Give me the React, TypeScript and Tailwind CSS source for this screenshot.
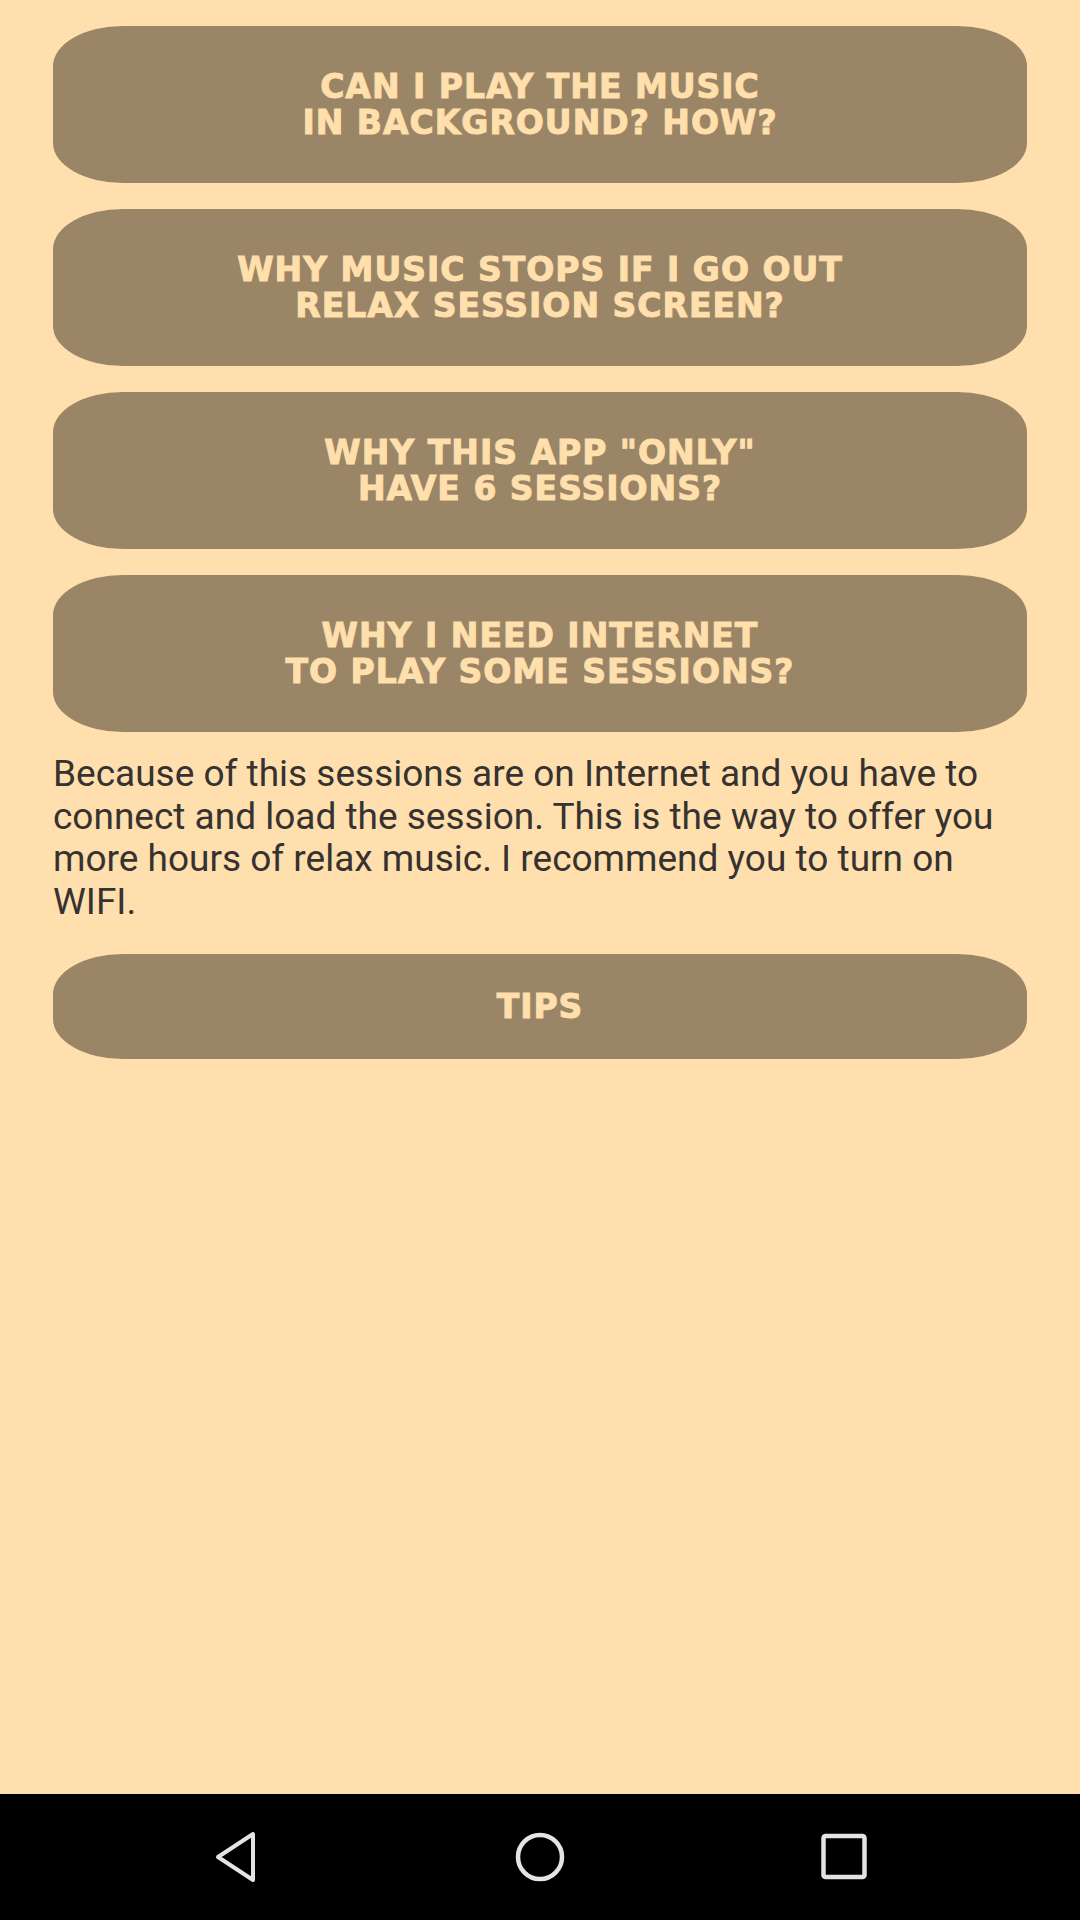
const questions = [
  ['CAN I PLAY THE MUSIC', 'IN BACKGROUND? HOW?'],
  ['WHY MUSIC STOPS IF I GO OUT', 'RELAX SESSION SCREEN?'],
  ['WHY THIS APP "ONLY"', 'HAVE 6 SESSIONS?'],
  ['WHY I NEED INTERNET', 'TO PLAY SOME SESSIONS?'],
];

function PillButton({ lines, tall = true }: { lines: string[]; tall?: boolean }) {
  return (
    <button
      className={`w-full ${tall ? 'h-[157px]' : 'h-[105px]'} rounded-[70px/40px] bg-[#9a8667] flex items-center justify-center text-center text-[#ffdfab] text-[33px] leading-[36px] tracking-[1px] font-bold [-webkit-text-stroke:1px_#ffdfab]`}
      style={{ fontFamily: '"DejaVu Sans", Verdana, sans-serif' }}
    >
      <span>
        {lines.map((l, i) => (
          <span key={l}>
            {i > 0 && <br />}
            {l}
          </span>
        ))}
      </span>
    </button>
  );
}

export default function App() {
  return (
    <div className="w-[1080px] h-[1920px] flex flex-col bg-[#ffdfae]">
      <div className="flex-1 flex flex-col px-[53px] pt-[26px]">
        <div className="flex flex-col gap-[26px]">
          {questions.map((q) => (
            <PillButton key={q[0]} lines={q} />
          ))}
        </div>
        <p
          className="mt-[21px] text-[37px] leading-[42.6px] text-[#353230]"
          style={{ fontFamily: 'Roboto, "Liberation Sans", sans-serif' }}
        >
          Because of this sessions are on Internet and you have to connect and load the session. This is the way to offer you more hours of relax music. I recommend you to turn on WIFI.
        </p>
        <div className="mt-[31px]">
          <PillButton lines={['TIPS']} tall={false} />
        </div>
      </div>
      <nav className="h-[126px] bg-black flex items-center justify-center gap-[252px]">
        <svg width="48" height="54" viewBox="0 0 48 54">
          <path d="M41 4 L41 50 L6 27 Z" fill="none" stroke="#e4e4e4" strokeWidth="4" strokeLinejoin="round" />
        </svg>
        <svg width="56" height="56" viewBox="0 0 56 56">
          <circle cx="28" cy="28" r="22" fill="none" stroke="#e4e4e4" strokeWidth="4.5" />
        </svg>
        <svg width="48" height="48" viewBox="0 0 48 48">
          <rect x="3.5" y="3" width="41" height="41" rx="2" fill="none" stroke="#e4e4e4" strokeWidth="4.5" />
        </svg>
      </nav>
    </div>
  );
}
